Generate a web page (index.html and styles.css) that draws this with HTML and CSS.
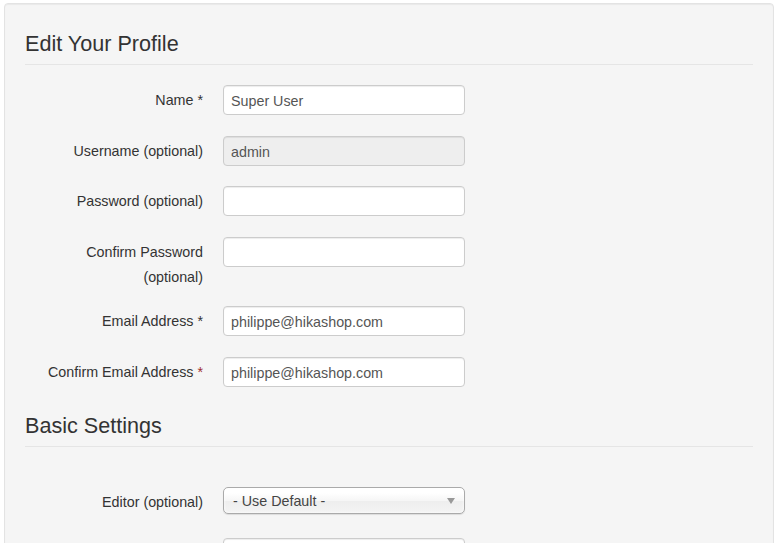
FILE: index.html
```html
<!DOCTYPE html>
<html>
  <head>
    <meta charset="UTF-8">
    <title>Edit Your Profile</title>
    <link rel="stylesheet" href="styles.css">
  </head>
  <body>
  <div class="well">
    <form class="form-horizontal">
      <fieldset>
        <legend>Edit Your Profile</legend>
        <div class="control-group">
          <label class="control-label">Name *</label>
          <div class="controls"><input type="text" value="Super User"></div>
        </div>
        <div class="control-group">
          <label class="control-label">Username (optional)</label>
          <div class="controls"><input type="text" value="admin" disabled></div>
        </div>
        <div class="control-group">
          <label class="control-label">Password (optional)</label>
          <div class="controls"><input type="password"></div>
        </div>
        <div class="control-group">
          <label class="control-label">Confirm Password <span class="optional">(optional)</span></label>
          <div class="controls"><input type="password"></div>
        </div>
        <div class="control-group">
          <label class="control-label">Email Address *</label>
          <div class="controls"><input type="text" value="philippe@hikashop.com"></div>
        </div>
        <div class="control-group">
          <label class="control-label">Confirm Email Address <span class="star">*</span></label>
          <div class="controls"><input type="text" value="philippe@hikashop.com"></div>
        </div>
      </fieldset>
      <fieldset>
        <legend>Basic Settings</legend>
        <div class="control-group first">
          <label class="control-label">Editor (optional)</label>
          <div class="controls">
            <div class="chzn-single"><span>- Use Default -</span><b></b></div>
          </div>
        </div>
        <div class="control-group">
          <label class="control-label"></label>
          <div class="controls"><input type="text"></div>
        </div>
      </fieldset>
    </form>
  </div>
  </body>
</html>
```

FILE: styles.css
```css
html, body {background: #fff;}
body {
  margin: 3px 4px 0 4px;
  font-family: "Liberation Sans", Arial, sans-serif;
  font-size: 14.3px;
  line-height: 18px;
  color: #333;
  overflow: hidden;
}

.well {
  background: #f5f5f5;
  border: 1px solid #e3e3e3;
  border-radius: 4px;
  box-shadow: inset 0 1px 1px rgba(0,0,0,.05);
  padding: 20px;
  min-height: 700px;
}

fieldset {border: 0; margin: 0; padding: 0;}

legend {
  display: block;
  width: 100%;
  padding: 0;
  margin-bottom: 20px;
  font-size: 21.6px;
  line-height: 40px;
  color: #333;
  border-bottom: 1px solid #e5e5e5;
}

.control-group {
  display: flex;
  gap: 20px;
  margin-bottom: 20.5px;
  min-height: 30px;
}
.control-group:last-child {margin-bottom: 19.5px;}
.control-group.first {margin-top: 20px;}

.control-label {
  width: 178px;
  flex: none;
  text-align: right;
  padding-top: 6px;
}
.control-label .optional {display: block; margin-top: 7px;}
.control-label .star {color: #a03030;}

.controls input {
  box-sizing: border-box;
  width: 242px;
  height: 30px;
  padding: 5px 7px 3px;
  font-family: "Liberation Sans", Arial, sans-serif;
  font-size: 14.3px;
  color: #555;
  background: #fff;
  border: 1px solid #ccc;
  border-radius: 4px;
  box-shadow: inset 0 1px 1px rgba(0,0,0,.075);
  outline: none;
}
.controls input[disabled] {background: #eee; color: #555;}

.chzn-single {
  box-sizing: border-box;
  position: relative;
  width: 242px;
  height: 27px;
  padding-left: 9px;
  line-height: 26px;
  color: #444;
  border: 1px solid #aaa;
  border-radius: 5px;
  background: linear-gradient(#fff 20%, #f6f6f6 50%, #eee 52%, #f4f4f4 100%);
  box-shadow: inset 0 0 3px #fff, 0 1px 1px rgba(0,0,0,.1);
}
.chzn-single b {
  position: absolute;
  right: 9px;
  top: 10px;
  border-left: 4px solid transparent;
  border-right: 4px solid transparent;
  border-top: 6px solid #999;
}
```
